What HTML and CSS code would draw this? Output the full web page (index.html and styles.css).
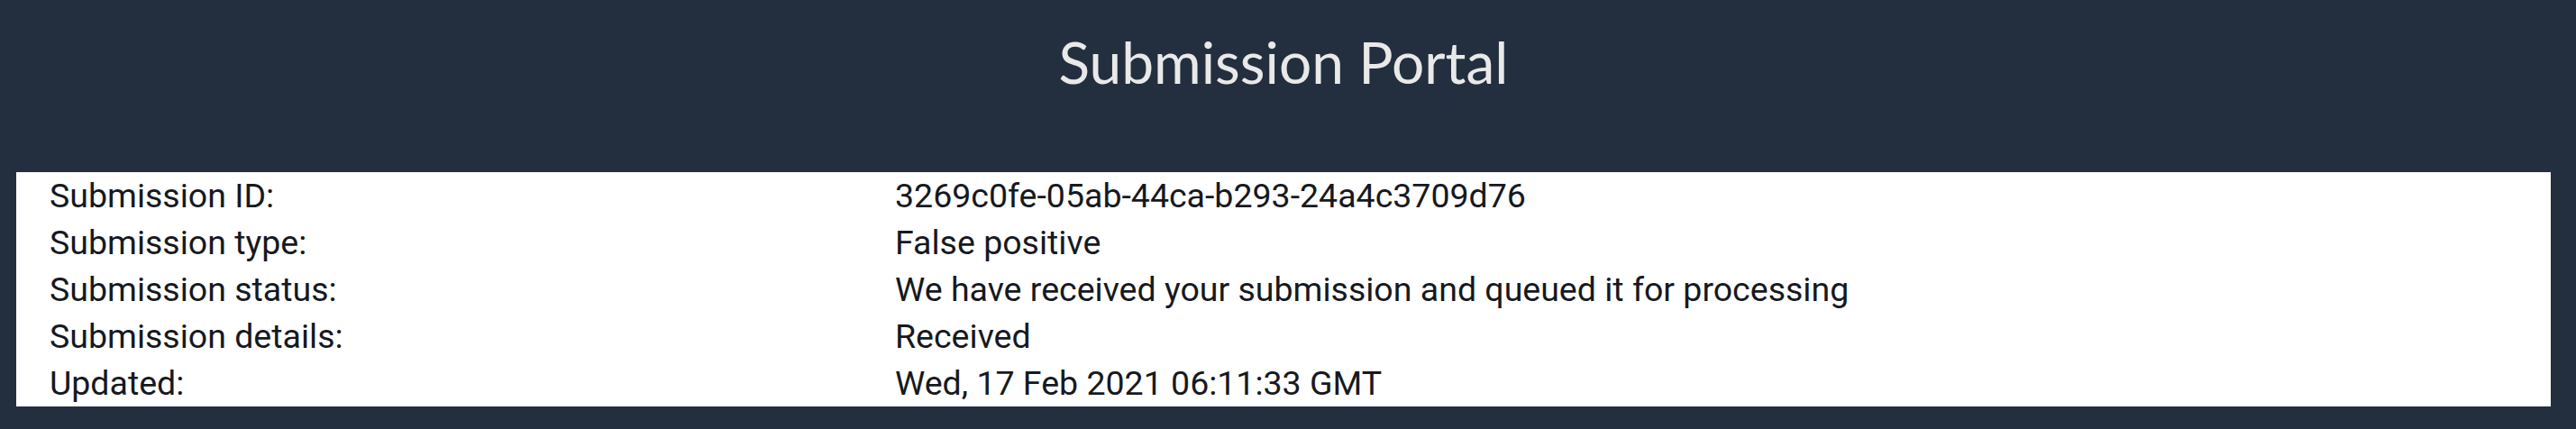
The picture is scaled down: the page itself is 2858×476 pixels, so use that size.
FILE: index.html
```html
<!DOCTYPE html>
<html lang="en">
<head>
    <meta charset="UTF-8">
    <meta name="viewport" content="width=device-width, initial-scale=1.0">
    <title>Submission Portal</title>
    <link rel="stylesheet" href="styles.css">
</head>
<body>
    <div class="page">
        <header class="portal-header">
            <h1>Submission Portal</h1>
        </header>
        <div class="details">
            <div class="detail-row">
                <span class="label">Submission ID:</span>
                <span class="value">3269c0fe-05ab-44ca-b293-24a4c3709d76</span>
            </div>
            <div class="detail-row">
                <span class="label">Submission type:</span>
                <span class="value">False positive</span>
            </div>
            <div class="detail-row">
                <span class="label">Submission status:</span>
                <span class="value">We have received your submission and queued it for processing</span>
            </div>
            <div class="detail-row">
                <span class="label">Submission details:</span>
                <span class="value">Received</span>
            </div>
            <div class="detail-row">
                <span class="label">Updated:</span>
                <span class="value">Wed, 17 Feb 2021 06:11:33 GMT</span>
            </div>
        </div>
    </div>
</body>
</html>
```

FILE: styles.css
```css
body {
    margin: 0;
    padding: 0;
    background: #232f3e;
    font-family: Roboto, "Liberation Sans", sans-serif;
}
.page {
    padding: 0 28px 25px 18px;
}
.portal-header {
    height: 191px;
    box-sizing: border-box;
    padding-top: 31px;
    text-align: center;
}
.portal-header h1 {
    margin: 0;
    font-family: Lato, "Noto Sans", sans-serif;
    font-weight: 400;
    font-size: 64px;
    line-height: 1.2;
    color: #e9e9e9;
}
.details {
    background: #ffffff;
    padding: 0 37px;
}
.detail-row {
    display: grid;
    grid-template-columns: 938px 1fr;
    height: 52px;
    line-height: 52px;
    font-size: 37.5px;
    color: #16191f;
}
```
